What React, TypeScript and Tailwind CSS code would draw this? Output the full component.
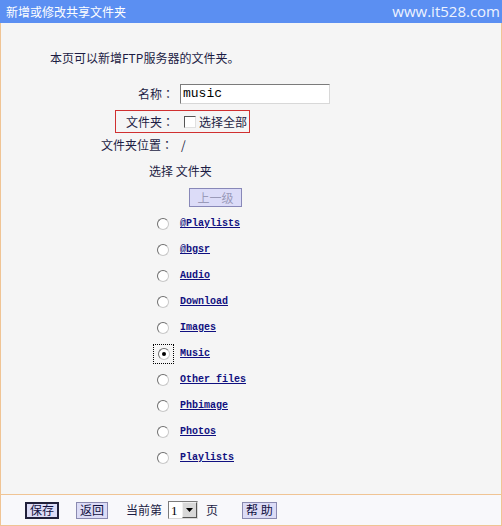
const folders = [
  '@Playlists',
  '@bgsr',
  'Audio',
  'Download',
  'Images',
  'Music',
  'Other files',
  'Phbimage',
  'Photos',
  'Playlists',
]

const cjk = "font-['SimSun','Noto_Sans_CJK_SC',sans-serif]"

// fullwidth colon, centred in its cell like the old SimSun pages
function Colon() {
  return <span className="font-['Noto_Sans_CJK_TC',sans-serif]">：</span>
}

function Radio({ checked }: { checked?: boolean }) {
  return (
    <span className="relative flex h-[12px] w-[12px] items-center justify-center rounded-full border border-[#c8c8c8] border-t-[#6e6e6e] border-l-[#6e6e6e] bg-white">
      {checked && <span className="h-[4px] w-[4px] rounded-full bg-black" />}
    </span>
  )
}

function FolderRow({ name, checked }: { name: string; checked?: boolean }) {
  return (
    <div className="flex h-[26px] items-center">
      <div className={`flex w-[179px] justify-end ${checked ? 'pr-[6px]' : 'pr-[11px]'}`}>
        {checked ? (
          <span className="flex h-[20px] w-[21px] items-center justify-center border border-dotted border-black">
            <Radio checked />
          </span>
        ) : (
          <Radio />
        )}
      </div>
      <a className="font-['Liberation_Mono',monospace] text-[10px] font-bold leading-none text-[#101080] underline">
        {name}
      </a>
    </div>
  )
}

function FooterButton({ label, strong }: { label: string; strong?: boolean }) {
  return (
    <button
      className={`flex h-[17px] items-center justify-center bg-[#dcdcf6] px-[3px] text-[12px] leading-none text-[#101040] ${
        strong ? 'border-2 border-[#20203a]' : 'border border-[#8a8ab0]'
      }`}
    >
      {label}
    </button>
  )
}

export default function App() {
  return (
    <div className={`flex h-[526px] w-[502px] flex-col bg-[#f7f7fa] ${cjk} text-[12px] text-[#1c1c44]`}>
      <header className="flex h-[23px] shrink-0 items-center justify-between bg-[#5b8ff2] pl-[6px] pr-[2px] text-white">
        <span className="text-[12px]">新增或修改共享文件夹</span>
        <span className="font-['Open_Sans',sans-serif] text-[15px] leading-none text-[#eef3ff]">www.it528.com</span>
      </header>

      <main className="flex flex-1 flex-col border-x border-[#f0c494] bg-[#f5f5f5]">
        <p className="ml-[49px] mt-[29px] leading-none">本页可以新增FTP服务器的文件夹。</p>

        <div className="mt-[20px] flex h-[20px] items-center">
          <span className="w-[173px] text-right">
            名称<Colon />
          </span>
          <div className="ml-[6px] flex h-[20px] w-[150px] items-center border border-[#7b7b7b] border-b-[#d8d8d8] border-r-[#d8d8d8] bg-white pl-[2px] font-['Liberation_Mono',monospace] text-[13px] text-black">
            music
          </div>
        </div>

        <div className="mt-[6px] ml-[114px] flex h-[23px] w-[135px] items-center border border-[#d03030]">
          <span className="w-[58px] text-right">
            文件夹<Colon />
          </span>
          <span className="ml-[10px] h-[12px] w-[12px] border border-[#e0e0e0] border-t-[#555] border-l-[#555] bg-white" />
          <span className="ml-[3px]">选择全部</span>
        </div>

        <div className="mt-[1px] flex h-[22px] items-center">
          <span className="w-[172px] text-right">
            文件夹位置<Colon />
          </span>
          <span className="ml-[8px]">/</span>
        </div>

        <div className="mt-[4px] flex h-[22px] items-center">
          <span className="ml-[148px]">选择 文件夹</span>
        </div>

        <div className="mt-[6px] flex">
          <button className="ml-[188px] flex h-[19px] w-[53px] items-center justify-center border border-[#8888b8] bg-[#dcdcf8] text-[12px] text-[#9a9ab8]">
            上一级
          </button>
        </div>

        <div className="mt-[4px] flex flex-col">
          {folders.map((f) => (
            <FolderRow key={f} name={f} checked={f === 'Music'} />
          ))}
        </div>
      </main>

      <footer className="flex h-[32px] shrink-0 items-center border border-[#f0c494] bg-[#f8f8fb] pl-[24px]">
        <FooterButton label="保存" strong />
        <span className="ml-[17px]">
          <FooterButton label="返回" />
        </span>
        <span className="ml-[18px]">当前第</span>
        <div className="ml-[6px] flex h-[18px] w-[30px] items-center border border-[#7b7b7b] border-b-[#d8d8d8] border-r-[#d8d8d8] bg-white">
          <span className="flex-1 pl-[2px] font-['Liberation_Serif',serif] text-[13px] leading-none text-black">1</span>
          <span className="flex h-[16px] w-[15px] items-center justify-center border border-[#f0f0f0] border-b-[#555] border-r-[#555] bg-[#d8d8d8]">
            <svg width="7" height="4" viewBox="0 0 7 4">
              <path d="M0 0h7L3.5 4z" fill="#000" />
            </svg>
          </span>
        </div>
        <span className="ml-[8px]">页</span>
        <span className="ml-[24px]">
          <FooterButton label="帮 助" />
        </span>
      </footer>
    </div>
  )
}
